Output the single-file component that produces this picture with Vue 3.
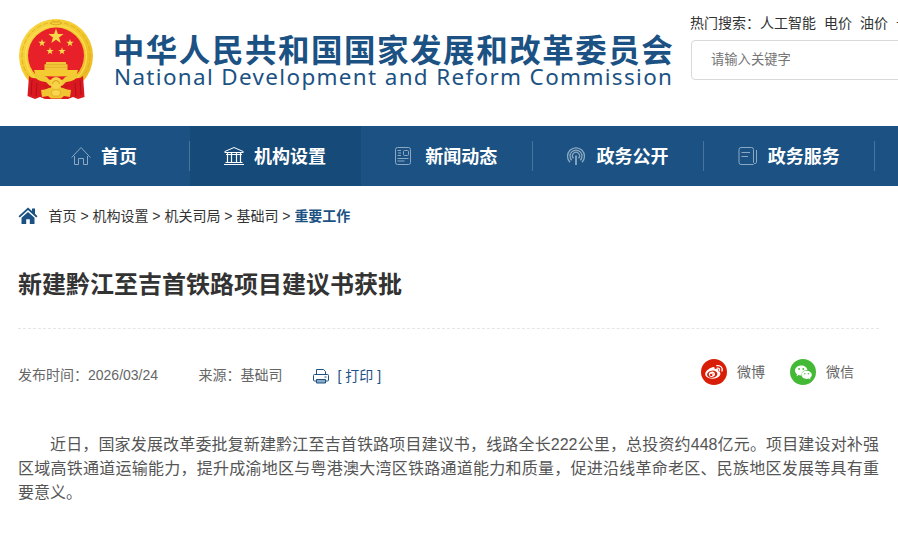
<script setup>
const hotWords = ['人工智能', '电价', '油价', '十五五']
const navItems = [
  { label: '首页', icon: 'home' },
  { label: '机构设置', icon: 'bank', active: true },
  { label: '新闻动态', icon: 'news' },
  { label: '政务公开', icon: 'signal' },
  { label: '政务服务', icon: 'service' }
]
const crumbs = ['首页', '机构设置', '机关司局', '基础司']
const star = '0,-1 .235,-.324 .951,-.309 .38,.124 .588,.809 0,.4 -.588,.809 -.38,.124 -.951,-.309 -.235,-.324'
const stars = [
  { x: 56, y: 36.5, s: 8 },
  { x: 42, y: 43, s: 3.9 },
  { x: 70, y: 43, s: 3.9 },
  { x: 50, y: 51.2, s: 3.9 },
  { x: 62, y: 51.2, s: 3.9 }
]
</script>

<template>
  <div class="page">
    <header class="header">
      <svg class="logo" width="680" height="110" viewBox="0 0 680 110">
        <defs>
          <linearGradient id="gold" x1="0" y1="0" x2="1" y2="1">
            <stop offset="0" stop-color="#f8d94a" />
            <stop offset=".5" stop-color="#f3c92c" />
            <stop offset="1" stop-color="#e9b522" />
          </linearGradient>
        </defs>
        <circle cx="56" cy="56" r="37" fill="url(#gold)" />
        <circle cx="56" cy="56" r="34" fill="none" stroke="#dfa722" stroke-width=".8" stroke-dasharray="5 2" />
        <circle cx="56" cy="56" r="30.5" fill="none" stroke="#fadf58" stroke-width="1.2" />
        <path d="M52 20q4 4 8 0M50 23q6 4 12 0" fill="none" stroke="#d99b16" stroke-width=".8" />
        <circle cx="56" cy="55.500" r="28" fill="#e8202a" />
        <polygon v-for="(s, i) in stars" :key="i" :points="star" :transform="`translate(${s.x} ${s.y}) scale(${s.s})`" fill="#f8d84a" />
        <path d="M46 62h20v2.300h1.500v5.700H44.500v-5.700H46z" fill="#f2c638" />
        <path d="M45.500 64.600h21M45 67.300h22" stroke="#d9a128" stroke-width=".6" />
        <path d="M34 70h44l-1.500 5q-20.500 3-41 0z" fill="#f4cc32" />
        <path d="M29 76q3 3 8 2l9 4h20l9-4q5 1 8-2l1.500 21-6.500 2-5-2-5 2H45l-5-2-5 2-7.500-3z" fill="#db1820" />
        <path d="M32 74q14 0 17 5.500l3 .5 1.500-2 2.500 1 2.500-1 1.500 2 3-.5q3-5.500 17-5.500-4 7-14 8l-4 4H50l-4-4q-10-1-14-8z" fill="#f2ca35" />
        <path d="M41 90q8-1 11-4h8q3 3 11 4l-1 7-6-1-3 2.500H51l-3-2.500-6 1z" fill="#f1c431" />
        <path d="M43 85q5 3 9 1M69 85q-5 3-9 1" fill="none" stroke="#cf1a1a" stroke-width="1.500" />
        <circle cx="56" cy="83" r="6" fill="#f6d347" />
        <path d="M52.500 84a3.500 3.500 0 0 1 7 0" fill="none" stroke="#de9b20" stroke-width="1" />
        <path d="M51 92q5-5 10 0l-2 4h-6z" fill="#f7d84f" stroke="#de9b20" stroke-width=".6" />
        <path d="M32 80l-1 15M37 83l-1 13M80 80l1 15M75 83l1 13" stroke="#b0101a" stroke-width="1" />
        <text class="logo-cn" x="112.800" y="61.800" textLength="560" lengthAdjust="spacing">中华人民共和国国家发展和改革委员会</text>
        <g transform="translate(114 84.700) scale(1.07 1)">
          <text class="logo-en" x="0" y="0" textLength="521.500" lengthAdjust="spacing">National Development and Reform Commission</text>
        </g>
      </svg>
      <div class="search">
        <div class="hot">
          <span>热门搜索：</span>
          <a v-for="w in hotWords" :key="w">{{ w }}</a>
        </div>
        <input class="search-input" type="text" placeholder="请输入关键字" />
      </div>
    </header>

    <nav class="nav">
      <a v-for="item in navItems" :key="item.label" class="nav-item" :class="{ active: item.active }">
        <svg class="nav-icon" width="20" height="20" viewBox="0 0 20 20" fill="none" stroke="currentColor" stroke-width="1">
          <path v-if="item.icon === 'home'" d="M.6 11.500L10 1.500l9.400 10M3.500 10v8.500h4V12.500h5v6h4V10" />
          <g v-else-if="item.icon === 'bank'">
            <path d="M.8 6.500v-1L10 1.500l9.200 4v1zM2 8.500h16M0 18.500h20M1.500 16.500h17" />
            <path d="M3.500 7v10M7.500 7v10M12.500 7v10M16.500 7v10" stroke-width="1.200" />
          </g>
          <g v-else-if="item.icon === 'news'">
            <rect x=".5" y="1.500" width="15" height="17" rx="2" />
            <rect x="8.500" y="4.500" width="5" height="5" rx="1" />
            <path d="M2.500 4.500h3.500M3 7h3M2.500 9.500h3.500M2.500 12.500h11M2.500 15h7" />
          </g>
          <g v-else-if="item.icon === 'signal'">
            <path d="M4 16.300a8.500 8.500 0 1 1 12 0M5.700 14.300a6 6 0 1 1 8.600 0M7.500 12.300a3.500 3.500 0 1 1 5 0" stroke-width="1.300" />
            <path d="M10 9.500v9.500" stroke-width="1.800" />
          </g>
          <g v-else>
            <path d="M15.500 18.500H3a2 2 0 0 1-2-2v-13a2 2 0 0 1 2-2h10.500a2 2 0 0 1 2 2v13a1.600 1.600 0 0 0 3 0V4M3.500 6.500H12M3.500 10.500H10" />
          </g>
        </svg>
        <span>{{ item.label }}</span>
      </a>
    </nav>

    <main class="content">
      <div class="crumbs">
        <svg class="crumb-home" width="20" height="18" viewBox="0 0 20 18" fill="#1b5283">
          <path d="M10 .5l4 3.600V1.500h3v5.300l2.500 2.400-1.300 1.300L10 3.100 1.800 10.500 .5 9.200z" />
          <path d="M10 4.900l6.500 5.900V17h-4.700v-4.700H8.200V17H3.500v-6.200z" />
        </svg>
        <span class="crumb-text">
          <template v-for="c in crumbs" :key="c">{{ c }} &gt; </template><b>重要工作</b>
        </span>
      </div>

      <h1 class="title">新建黔江至吉首铁路项目建议书获批</h1>

      <div class="meta">
        <span class="date">发布时间：2026/03/24</span>
        <span class="source">来源：基础司</span>
        <a class="print">
          <svg width="16" height="15" viewBox="0 0 16 15" fill="none" stroke="#1b5283">
            <path d="M3.500 5.500v-5h7l2 2v3M3 12H1.500a1 1 0 0 1-1-1V6.500a1 1 0 0 1 1-1h13a1 1 0 0 1 1 1V11a1 1 0 0 1-1 1H13" />
            <path d="M3.500 10.500h9v3.500h-9z" fill="#8eabc6" />
            <path d="M11.500 8h2" />
          </svg>
          <span>[ 打印 ]</span>
        </a>
        <div class="share">
          <a class="share-item">
            <svg width="26" height="26" viewBox="0 0 26 26">
              <circle cx="13" cy="13" r="13" fill="#d81e06" />
              <path d="M11.500 8.300c1.400-.6 2.600 0 2.100 1.900 2.400-.9 4.300-.3 3.500 1.700 5 1.700 1.500 7.800-5.600 7.800-4.500 0-7.300-2.100-7.300-4.600 0-2.400 3.700-5.900 7.300-6.800z" fill="#fff" />
              <ellipse cx="11.200" cy="15.200" rx="5.200" ry="3.600" fill="#d81e06" transform="rotate(-8 11.200 15.200)" />
              <ellipse cx="10.900" cy="15.300" rx="3.100" ry="2.600" fill="#fff" transform="rotate(-15 10.900 15.300)" />
              <circle cx="10.200" cy="15.900" r="1.200" fill="#d81e06" />
              <circle cx="12" cy="14.700" r=".5" fill="#d81e06" />
              <path d="M16.200 9.200c1.800-.3 2.700.8 2.200 2.500M15.800 6.700c3.800-.7 6.200 2.100 5.200 5.400" fill="none" stroke="#fff" stroke-width="1.300" stroke-linecap="round" />
            </svg>
            <span>微博</span>
          </a>
          <a class="share-item">
            <svg width="26" height="26" viewBox="0 0 26 26">
              <circle cx="13" cy="13" r="13" fill="#44b935" />
              <path d="M11.200 6.500c3.300 0 5.900 2 6.200 4.600-3.600 0-6.300 2.300-5.900 5.400-1 .1-2-.1-2.900-.4L6.500 17.300l.6-2C5.700 14.300 5 13 5 11.600c0-2.900 2.800-5.100 6.200-5.100z" fill="#fff" />
              <path d="M16.600 11.700c2.900 0 5.200 1.800 5.200 4.100 0 1.200-.7 2.300-1.700 3.100l.4 1.500-1.700-.8c-3.900 1.100-7.300-1-7.300-3.800 0-2.300 2.300-4.100 5.100-4.100z" fill="#fff" />
              <g fill="#44b935">
                <circle cx="9.100" cy="10" r=".9" /><circle cx="13.300" cy="10" r=".9" />
                <circle cx="14.800" cy="14.700" r=".7" /><circle cx="18.300" cy="14.700" r=".7" />
              </g>
            </svg>
            <span>微信</span>
          </a>
        </div>
      </div>

      <p class="article">近日，国家发展改革委批复新建黔江至吉首铁路项目建议书，线路全长222公里，总投资约448亿元。项目建设对补强区域高铁通道运输能力，提升成渝地区与粤港澳大湾区铁路通道能力和质量，促进沿线革命老区、民族地区发展等具有重要意义。</p>
    </main>
  </div>
</template>

<style>
body {
  margin: 0;
  overflow: hidden;
  background: #fff;
}
</style>

<style scoped>
.page {
  width: 898px;
  height: 541px;
  overflow: hidden;
  font-family: "Liberation Sans", "Noto Sans CJK SC", sans-serif;
  font-size: 14px;
  color: #333;
}
.header {
  display: flex;
  height: 126px;
  overflow: hidden;
}
.logo {
  flex: none;
}
.logo-cn {
  font-family: "Noto Sans CJK SC", sans-serif;
  font-weight: 700;
  font-size: 31.500px;
  fill: #1b5283;
}
.logo-en {
  font-family: "Noto Sans", sans-serif;
  font-size: 21px;
  fill: #1b5283;
}
.search {
  flex: none;
  width: 300px;
  padding: 13px 0 0 10px;
}
.hot {
  display: flex;
  height: 20px;
  line-height: 20px;
  white-space: nowrap;
}
.hot a {
  margin-right: 8px;
}
.search-input {
  box-sizing: border-box;
  display: block;
  width: 280px;
  height: 40px;
  margin: 7px 0 0 1px;
  padding: 0 19px 2px;
  border: 1px solid #d9d9d9;
  border-radius: 4px;
  font-family: inherit;
  font-size: 13.300px;
}
.search-input::placeholder {
  color: #757575;
}
.nav {
  display: flex;
  height: 60px;
  padding-left: 18px;
  background: #1b5283;
}
.nav-item {
  position: relative;
  box-sizing: border-box;
  flex: none;
  display: flex;
  align-items: center;
  justify-content: center;
  gap: 10px;
  width: 171.300px;
  padding-right: 1.500px;
  color: #fff;
  font-size: 18px;
  font-weight: 700;
}
.nav-item:first-child {
  width: 172px;
  padding-right: 0;
}
.nav-item span {
  padding-bottom: 2px;
}
.nav-item::after {
  content: "";
  position: absolute;
  right: 0;
  top: 15px;
  width: 1px;
  height: 30px;
  background: #49759c;
}
.nav-item.active {
  background: #164a78;
}
.nav-item.active::after {
  display: none;
}
.nav-icon {
  opacity: .5;
}
.active .nav-icon {
  opacity: 1;
}
.content {
  width: 861px;
  padding-left: 18px;
}
.crumbs {
  display: flex;
  align-items: center;
  gap: 10.500px;
  height: 60px;
}
.crumb-text {
  padding-bottom: 2px;
}
.crumbs b {
  color: #1b5283;
}
.title {
  height: 82px;
  margin: 0;
  border-bottom: 1px dashed #e6e6e6;
  font-size: 24px;
  font-weight: 700;
  line-height: 77px;
}
.meta {
  display: flex;
  align-items: center;
  height: 92px;
  color: #666;
}
.date,
.source {
  padding-bottom: 2px;
}
.source {
  margin-left: 40.500px;
}
.print {
  display: flex;
  align-items: center;
  gap: 9px;
  margin: 2px 0 0 30px;
  color: #1b5283;
}
.print span {
  padding-bottom: 2px;
}
.share {
  display: flex;
  gap: 25px;
  margin: 0 25px 6px auto;
}
.share-item {
  display: flex;
  align-items: center;
  gap: 10px;
}
.share-item span {
  padding-bottom: 2px;
}
.article {
  margin: 12px 0 0;
  color: #555;
  font-size: 16px;
  line-height: 24px;
  text-align: justify;
  text-indent: 2em;
}
</style>
